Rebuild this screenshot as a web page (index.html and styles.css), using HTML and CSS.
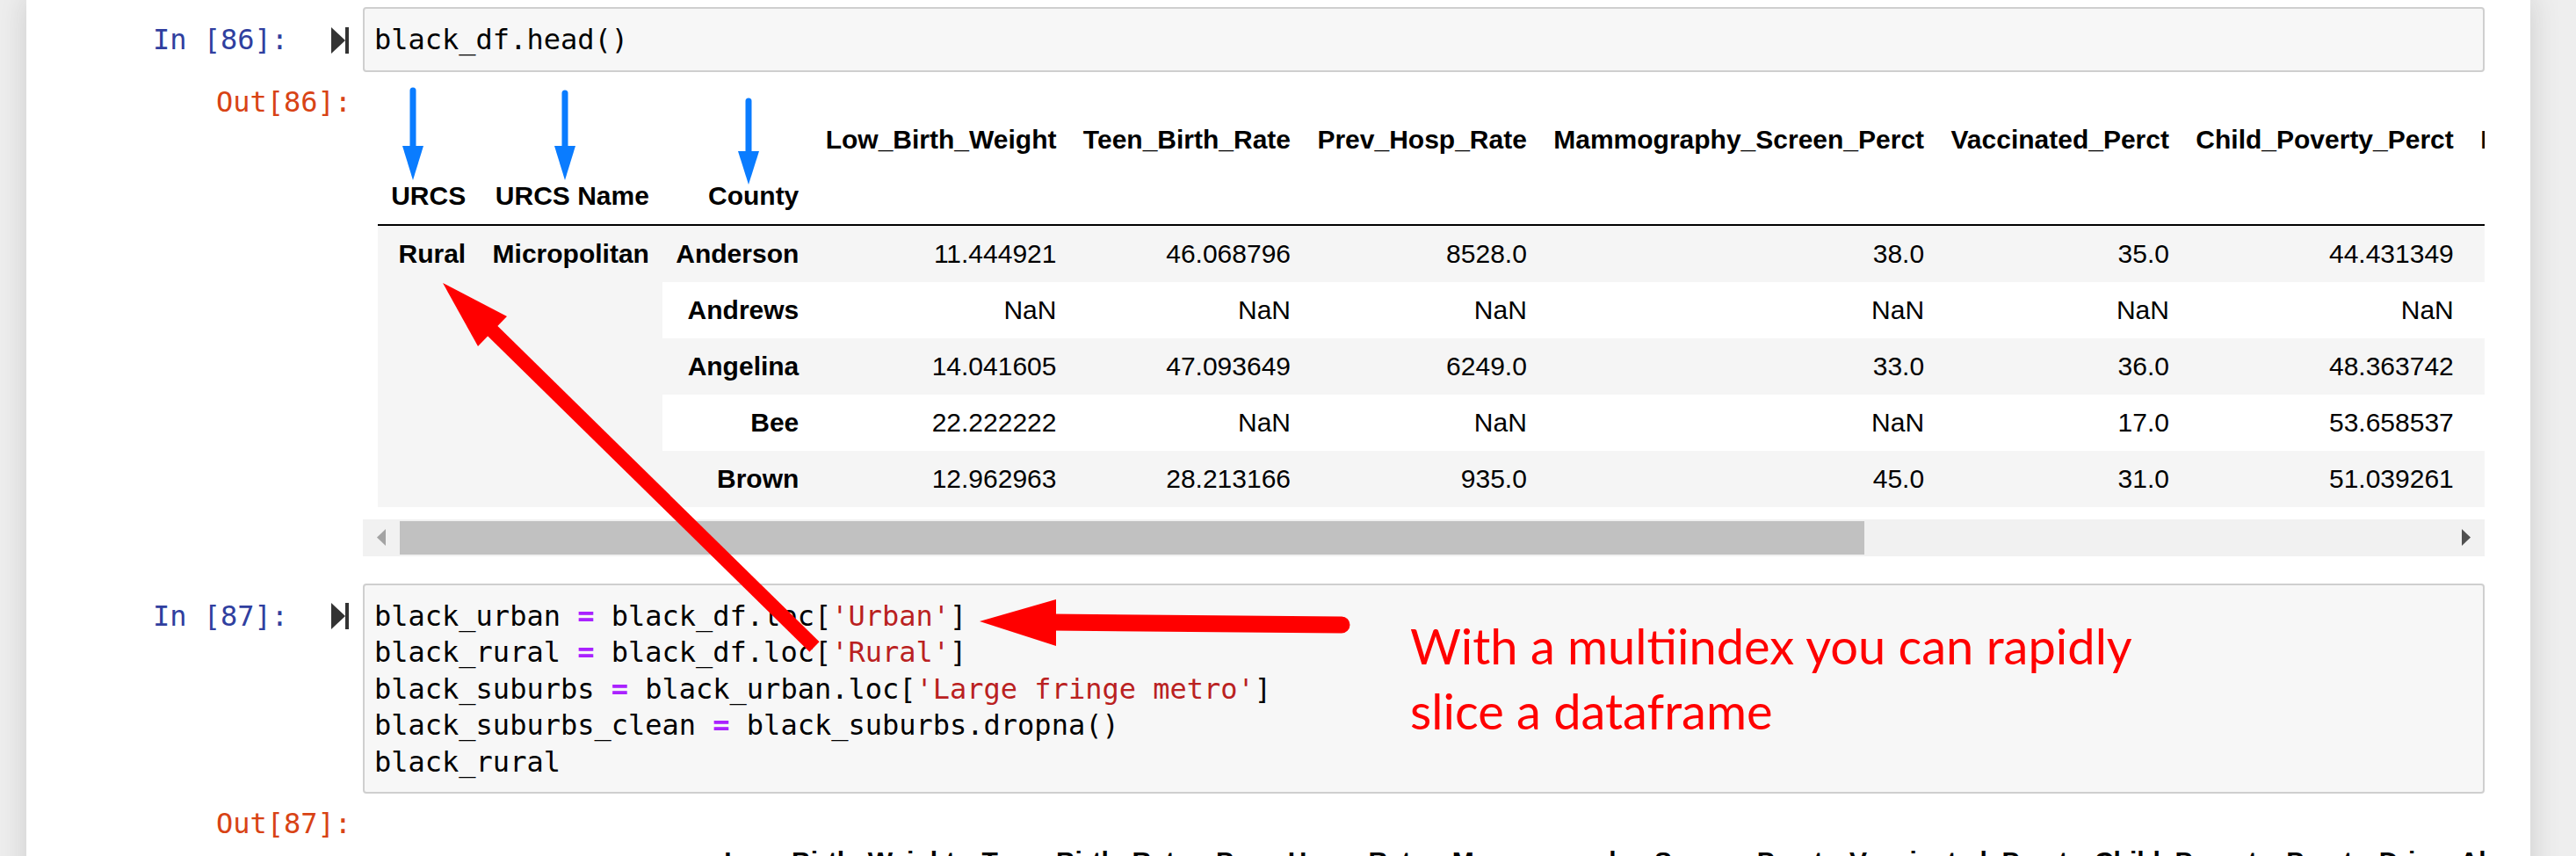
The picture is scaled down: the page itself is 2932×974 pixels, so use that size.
FILE: index.html
```html
<!DOCTYPE html>
<html>
<head>
<meta charset="utf-8">
<title>Notebook</title>
<link rel="stylesheet" href="styles.css">
</head>
<body>
<div class="notebook">

  <div class="cell">
    <div class="input">
      <div class="prompt in-prompt"><span class="ptext">In [86]:</span><svg class="marker" width="20" height="30" viewBox="0 0 20 30"><polygon points="0,0 16,15 0,30" fill="#333"/><rect x="16" y="0" width="4" height="30" fill="#333"/></svg></div>
      <div class="code-box"><pre class="code">black_df.head()</pre></div>
    </div>
    <div class="output">
      <div class="prompt out-prompt">Out[86]:</div>
      <div class="out-area">
        <div class="scroll-clip">
          <table class="df">
            <thead>
              <tr><th></th><th></th><th></th><th>Low_Birth_Weight</th><th>Teen_Birth_Rate</th><th>Prev_Hosp_Rate</th><th>Mammography_Screen_Perct</th><th>Vaccinated_Perct</th><th>Child_Poverty_Perct</th><th>Drive_Alone_Perct</th></tr>
              <tr><th>URCS</th><th>URCS Name</th><th>County</th><th></th><th></th><th></th><th></th><th></th><th></th><th></th></tr>
            </thead>
            <tbody>
              <tr><th rowspan="5">Rural</th><th rowspan="5">Micropolitan</th><th>Anderson</th><td>11.444921</td><td>46.068796</td><td>8528.0</td><td>38.0</td><td>35.0</td><td>44.431349</td><td>79.0</td></tr>
              <tr><th>Andrews</th><td>NaN</td><td>NaN</td><td>NaN</td><td>NaN</td><td>NaN</td><td>NaN</td><td>NaN</td></tr>
              <tr><th>Angelina</th><td>14.041605</td><td>47.093649</td><td>6249.0</td><td>33.0</td><td>36.0</td><td>48.363742</td><td>81.0</td></tr>
              <tr><th>Bee</th><td>22.222222</td><td>NaN</td><td>NaN</td><td>NaN</td><td>17.0</td><td>53.658537</td><td>NaN</td></tr>
              <tr><th>Brown</th><td>12.962963</td><td>28.213166</td><td>935.0</td><td>45.0</td><td>31.0</td><td>51.039261</td><td>82.0</td></tr>
            </tbody>
          </table>
        </div>
        <div class="hscroll">
          <div class="sb-btn"><svg width="10" height="19" viewBox="0 0 10 19"><polygon points="10,0 0,9.5 10,19" fill="#a3a3a3"/></svg></div>
          <div class="sb-track"><div class="sb-thumb"></div></div>
          <div class="sb-btn"><svg width="10" height="19" viewBox="0 0 10 19"><polygon points="0,0 10,9.5 0,19" fill="#505050"/></svg></div>
        </div>
      </div>
    </div>
  </div>

  <div class="cell cell-next">
    <div class="input">
      <div class="prompt in-prompt"><span class="ptext">In [87]:</span><svg class="marker" width="20" height="30" viewBox="0 0 20 30"><polygon points="0,0 16,15 0,30" fill="#333"/><rect x="16" y="0" width="4" height="30" fill="#333"/></svg></div>
      <div class="code-box"><pre class="code">black_urban <span class="op">=</span> black_df.loc[<span class="str">'Urban'</span>]
black_rural <span class="op">=</span> black_df.loc[<span class="str">'Rural'</span>]
black_suburbs <span class="op">=</span> black_urban.loc[<span class="str">'Large fringe metro'</span>]
black_suburbs_clean <span class="op">=</span> black_suburbs.dropna()
black_rural</pre></div>
    </div>
    <div class="output">
      <div class="prompt out-prompt">Out[87]:</div>
      <div class="out-area">
        <div class="scroll-clip">
          <table class="df">
            <thead>
              <tr><th></th><th></th><th>Low_Birth_Weight</th><th>Teen_Birth_Rate</th><th>Prev_Hosp_Rate</th><th>Mammography_Screen_Perct</th><th>Vaccinated_Perct</th><th>Child_Poverty_Perct</th><th>Drive_Alone_Perct</th></tr>
              <tr><th>URCS Name</th><th>County</th><th></th><th></th><th></th><th></th><th></th><th></th><th></th></tr>
            </thead>
            <tbody>
              <tr><th>Micropolitan</th><th>Anderson</th><td>11.444921</td><td>46.068796</td><td>8528.0</td><td>38.0</td><td>35.0</td><td>44.431349</td><td>79.0</td></tr>
            </tbody>
          </table>
        </div>
      </div>
    </div>
  </div>

</div>

<svg class="annot" width="2932" height="974" viewBox="0 0 2932 974">
  <g fill="#0a7cff" stroke="#0a7cff">
    <line x1="470" y1="103" x2="470" y2="170" stroke-width="7" stroke-linecap="round"/>
    <polygon points="458,166 482,166 470,205" stroke="none"/>
    <line x1="643" y1="106" x2="643" y2="170" stroke-width="7" stroke-linecap="round"/>
    <polygon points="631,166 655,166 643,205" stroke="none"/>
    <line x1="852" y1="115" x2="852" y2="176" stroke-width="7" stroke-linecap="round"/>
    <polygon points="840,172 864,172 852,210" stroke="none"/>
  </g>
  <g fill="#ff0000" stroke="#ff0000">
    <line x1="556" y1="372" x2="927" y2="736" stroke-width="16"/>
    <polygon points="504,322 577,360 544,394" stroke="none"/>
    <line x1="1195" y1="708" x2="1527" y2="711" stroke-width="19" stroke-linecap="round"/>
    <polygon points="1115,707 1202,682 1202,735" stroke="none"/>
  </g>
</svg>
<div class="note">With a multiindex you can rapidly<br>slice a dataframe</div>
</body>
</html>
```

FILE: styles.css
```css
html, body {
  margin: 0;
  height: 974px;
  overflow: hidden;
}

body {
  position: relative;
  width: 2932px;
  background: #eeeeee;
  font-family: "Liberation Sans", Arial, sans-serif;
}

.notebook {
  box-sizing: border-box;
  width: 2850px;
  min-height: 974px;
  margin-left: 30px;
  padding: 8px 52px 0 0;
  background: #ffffff;
  box-shadow: 0 0 30px 2px rgba(87, 87, 87, 0.2);
}

.input {
  display: flex;
  align-items: flex-start;
}

.prompt {
  flex: none;
  box-sizing: border-box;
  width: 383px;
  padding-right: 13px;
  display: flex;
  justify-content: flex-end;
  align-items: center;
  font-family: "DejaVu Sans Mono", "Liberation Mono", monospace;
  font-size: 32px;
  line-height: 41.5px;
  white-space: pre;
}

.in-prompt {
  color: #303f9f;
  padding-top: 17px;
}

.out-prompt {
  color: #d84315;
  padding-top: 6px;
}

.marker {
  flex: none;
  margin-left: 49px;
  margin-right: 3px;
}

.code-box {
  flex: 1;
  min-width: 0;
  border: 2px solid #cfcfcf;
  border-radius: 4px;
  background: #f7f7f7;
  padding: 15px 12px 13px 11px;
}

.code {
  margin: 0;
  font-family: "DejaVu Sans Mono", "Liberation Mono", monospace;
  font-size: 32px;
  line-height: 41.5px;
  color: #000000;
}

.op {
  color: #aa22ff;
  font-weight: bold;
}

.str {
  color: #ba2121;
}

.output {
  display: flex;
  align-items: flex-start;
  margin-top: 8px;
}

.out-area {
  flex: 1;
  min-width: 0;
}

.scroll-clip {
  overflow: hidden;
  padding: 37px 0 14px 17px;
}

.df {
  border-collapse: collapse;
  border-spacing: 0;
  font-size: 30px;
  line-height: 34px;
  color: #000000;
  white-space: nowrap;
}

.df th,
.df td {
  padding: 15px 15.2px;
  text-align: right;
  vertical-align: middle;
}

.df th {
  font-weight: bold;
}

.df thead {
  border-bottom: 2px solid #000000;
}

.df thead th {
  vertical-align: bottom;
}

.df tbody th {
  vertical-align: top;
}

.df tbody tr:nth-child(odd) {
  background: #f5f5f5;
}

.hscroll {
  display: flex;
  height: 42px;
  background: #f1f1f1;
}

.sb-btn {
  flex: none;
  width: 42px;
  display: flex;
  align-items: center;
  justify-content: center;
}

.sb-track {
  flex: 1;
  display: flex;
  align-items: center;
}

.sb-thumb {
  width: 1667px;
  height: 38px;
  background: #c1c1c1;
}

.cell-next {
  margin-top: 31px;
}

.annot {
  position: absolute;
  left: 0;
  top: 0;
  pointer-events: none;
}

.note {
  position: absolute;
  left: 1605px;
  top: 698px;
  font-family: Lato, "Open Sans", sans-serif;
  font-size: 56px;
  line-height: 74px;
  color: #ff0000;
  white-space: nowrap;
}
```
